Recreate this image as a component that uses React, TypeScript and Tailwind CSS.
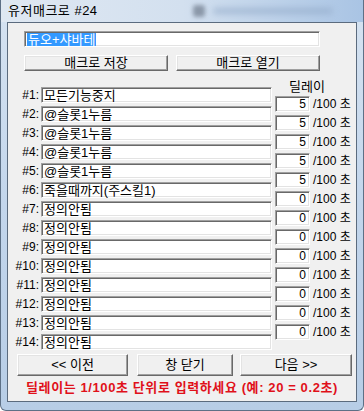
import React from "react";

const names = [
  "모든기능중지",
  "@슬롯1누름",
  "@슬롯1누름",
  "@슬롯1누름",
  "@슬롯1누름",
  "죽을때까지(주스킬1)",
  "정의안됨",
  "정의안됨",
  "정의안됨",
  "정의안됨",
  "정의안됨",
  "정의안됨",
  "정의안됨",
  "정의안됨",
];
const delays = [5, 5, 5, 5, 5, 0, 0, 0, 0, 0, 0, 0, 0];

const font = { fontFamily: '"Liberation Sans", "Noto Sans CJK KR", sans-serif' };

const sunken =
  "bg-white border border-t-[#a0a0a0] border-l-[#a0a0a0] border-b-white border-r-white shadow-[inset_1px_1px_0_#696969,inset_-1px_-1px_0_#e3e3e3]";
const raised =
  "bg-[#f0f0f0] border border-t-white border-l-white border-b-[#696969] border-r-[#696969] shadow-[inset_-1px_-1px_0_#a0a0a0,inset_1px_1px_0_#e3e3e3] flex items-center justify-center text-[13px] leading-[14px] text-black";

export default function App() {
  return (
    <div
      className="w-[364px] h-[411px] flex flex-col bg-gradient-to-b from-[#d6e3f1] via-[#c3d6ec] to-[#b7cde6] rounded-b-[6px] border-b border-l border-r border-[#5d7086] overflow-hidden"
      style={font}
    >
      {/* title bar */}
      <div className="h-[22px] flex items-center bg-gradient-to-r from-[#dfe8f2] via-[#d3e0ef] to-[#a9c4e4]">
        <span className="pl-[7px] text-[13px] leading-[14px] tracking-[0.5px] text-black">유저매크로 #24</span>
        <div className="ml-[95px] w-[12px] h-[12px] rounded-[3px] bg-[#6f7b8c] blur-[2px] opacity-70" />
        <div className="ml-[8px] w-[120px] h-[6px] rounded bg-[#8fa7c6] blur-[3px] opacity-60" />
      </div>
      {/* client area */}
      <div className="ml-[6px] mr-[6px] h-[380px] border border-[#5b6b7e] bg-[#f0f0f0] flex flex-col">
        <div className={`ml-[16px] mt-[8px] w-[296px] h-[16px] ${sunken} flex items-center pl-[2px]`}>
          <span className="bg-[#3399ff] text-white text-[13px] leading-[13px] px-[1px]">듀오+샤바테</span>
        </div>
        <div className="ml-[16px] mt-[8px] flex gap-[8px]">
          <div className={`w-[144px] h-[16px] ${raised}`}>매크로 저장</div>
          <div className={`w-[144px] h-[16px] ${raised}`}>매크로 열기</div>
        </div>
        <div className="mt-[9px] flex items-start">
          <div className="pt-[7px] flex flex-col gap-[3px]">
            {names.map((n, i) => (
              <div key={i} className="flex items-center h-[16px]">
                <span className="w-[31px] text-right text-[12px] leading-[14px] text-black">#{i + 1}:</span>
                <div className={`ml-[2px] w-[231px] h-[16px] ${sunken} flex items-center pl-[2px]`}>
                  <span className="text-[13px] leading-[13px] text-black whitespace-nowrap">{n}</span>
                </div>
              </div>
            ))}
          </div>
          <div className="ml-[3px] flex flex-col">
            <div className="h-[16px] pl-[14px] text-[13px] leading-[14px] text-black">딜레이</div>
            <div className="flex flex-col gap-[3px]">
              {delays.map((d, i) => (
                <div key={i} className="flex items-center h-[16px]">
                  <div className={`w-[35px] h-[16px] ${sunken} flex items-center justify-end pr-[3px]`}>
                    <span className="text-[12px] leading-[13px] text-black">{d}</span>
                  </div>
                  <span className="ml-[3px] text-[12px] leading-[14px] text-black whitespace-nowrap">/100 초</span>
                </div>
              ))}
            </div>
          </div>
        </div>
        <div className="mt-[4px] ml-[9px] flex">
          <div className={`w-[111px] h-[22px] ${raised}`}>&lt;&lt; 이전</div>
          <div className={`ml-[9px] w-[96px] h-[22px] ${raised}`}>창 닫기</div>
          <div className={`ml-[7px] w-[112px] h-[22px] ${raised}`}>다음 &gt;&gt;</div>
        </div>
        <div className="mt-[5px] text-center text-[13px] leading-[14px] font-bold tracking-[0.6px] text-[#e0101a] whitespace-nowrap">
          딜레이는 1/100초 단위로 입력하세요 (예: 20 = 0.2초)
        </div>
      </div>
    </div>
  );
}
